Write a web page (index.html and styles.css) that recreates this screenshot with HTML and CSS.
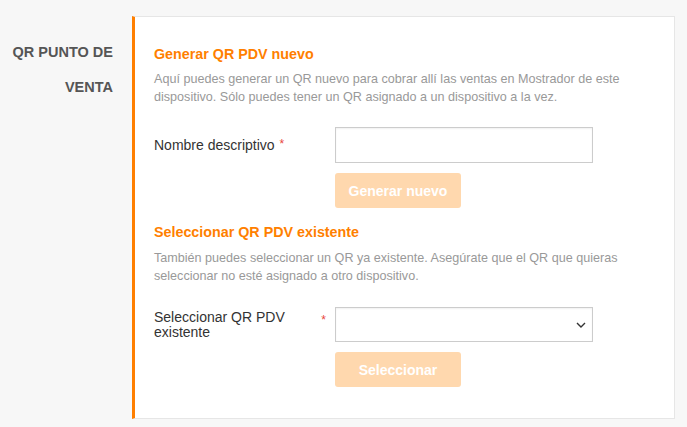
FILE: index.html
```html
<!DOCTYPE html>
<html>
<head>
    <meta charset="utf-8">
    <title>QR Punto de Venta</title>
    <link rel="stylesheet" href="styles.css">
</head>
<body>
    <div class="settings-row">
        <div class="section-title">QR PUNTO DE VENTA</div>

        <div class="card">
            <!-- Generar nuevo -->
            <h3>Generar QR PDV nuevo</h3>
            <p class="help">Aquí puedes generar un QR nuevo para cobrar allí las ventas en Mostrador de este dispositivo. Sólo puedes tener un QR asignado a un dispositivo a la vez.</p>

            <div class="field">
                <label class="field-label"><span>Nombre descriptivo</span><span class="req">*</span></label>
                <input type="text" class="text-input">
            </div>
            <div class="actions">
                <button disabled>Generar nuevo</button>
            </div>

            <!-- Seleccionar existente -->
            <h3 class="second">Seleccionar QR PDV existente</h3>
            <p class="help second-help">También puedes seleccionar un QR ya existente. Asegúrate que el QR que quieras seleccionar no esté asignado a otro dispositivo.</p>

            <div class="field select-field">
                <label class="field-label wrap"><span>Seleccionar QR PDV existente</span><span class="req">*</span></label>
                <div class="select-box">
                    <svg width="10" height="6" viewBox="0 0 10 6"><path d="M1 1l4 4 4-4" fill="none" stroke="#333" stroke-width="1.4"/></svg>
                </div>
            </div>
            <div class="actions">
                <button disabled>Seleccionar</button>
            </div>
        </div>
    </div>
</body>
</html>
```

FILE: styles.css
```css
body {
    margin: 0;
    background: #f7f7f7;
    font-family: "Liberation Sans", Arial, sans-serif;
    color: #333;
}
.settings-row {
    display: flex;
    padding: 16px 12px 8px 0;
}
.section-title {
    width: 113px;
    flex-shrink: 0;
    margin-right: 19px;
    padding-top: 19px;
    text-align: right;
    font-size: 14.5px;
    font-weight: bold;
    line-height: 35px;
    color: #555;
}
.card {
    flex: 1;
    background: #fff;
    border: 1px solid #e6e6e6;
    border-left: 3px solid #ff7f00;
    padding: 27px 19px 31px 19px;
}
h3 {
    margin: 0;
    font-size: 14.3px;
    line-height: 20px;
    color: #ff7f00;
}
h3.second {
    margin-top: 14px;
}
.help {
    margin: 6px 0 0;
    font-size: 12.6px;
    line-height: 18px;
    color: #999;
}
.help.second-help {
    margin-top: 7px;
}
.field {
    display: flex;
    align-items: center;
    margin-top: 21px;
}
.field.select-field {
    margin-top: 22px;
}
.field-label {
    display: flex;
    align-items: center;
    width: 172px;
    margin-right: 9px;
    font-size: 14px;
    line-height: 15px;
}
.req {
    color: #e8463c;
    font-size: 12px;
    margin-left: 5px;
    align-self: flex-start;
    margin-top: -1px;
}
.field-label.wrap .req {
    align-self: center;
    margin-top: -8px;
}
.text-input {
    width: 258px;
    height: 36px;
    box-sizing: border-box;
    border: 1px solid #ccc;
    box-shadow: inset 0 1px 2px rgba(0,0,0,0.06);
    margin: 0;
}
.select-box {
    width: 258px;
    height: 35px;
    box-sizing: border-box;
    border: 1px solid #ccc;
    box-shadow: inset 0 1px 2px rgba(0,0,0,0.06);
    display: flex;
    align-items: center;
    justify-content: flex-end;
    padding-right: 6px;
}
.actions {
    padding-left: 181px;
    margin-top: 10px;
}
button {
    background: #ffd8ae;
    color: #fff;
    border: none;
    border-radius: 3px;
    font-family: "Liberation Sans", Arial, sans-serif;
    font-size: 14px;
    font-weight: bold;
    width: 126px;
    height: 35px;
    padding: 0;
}
```
